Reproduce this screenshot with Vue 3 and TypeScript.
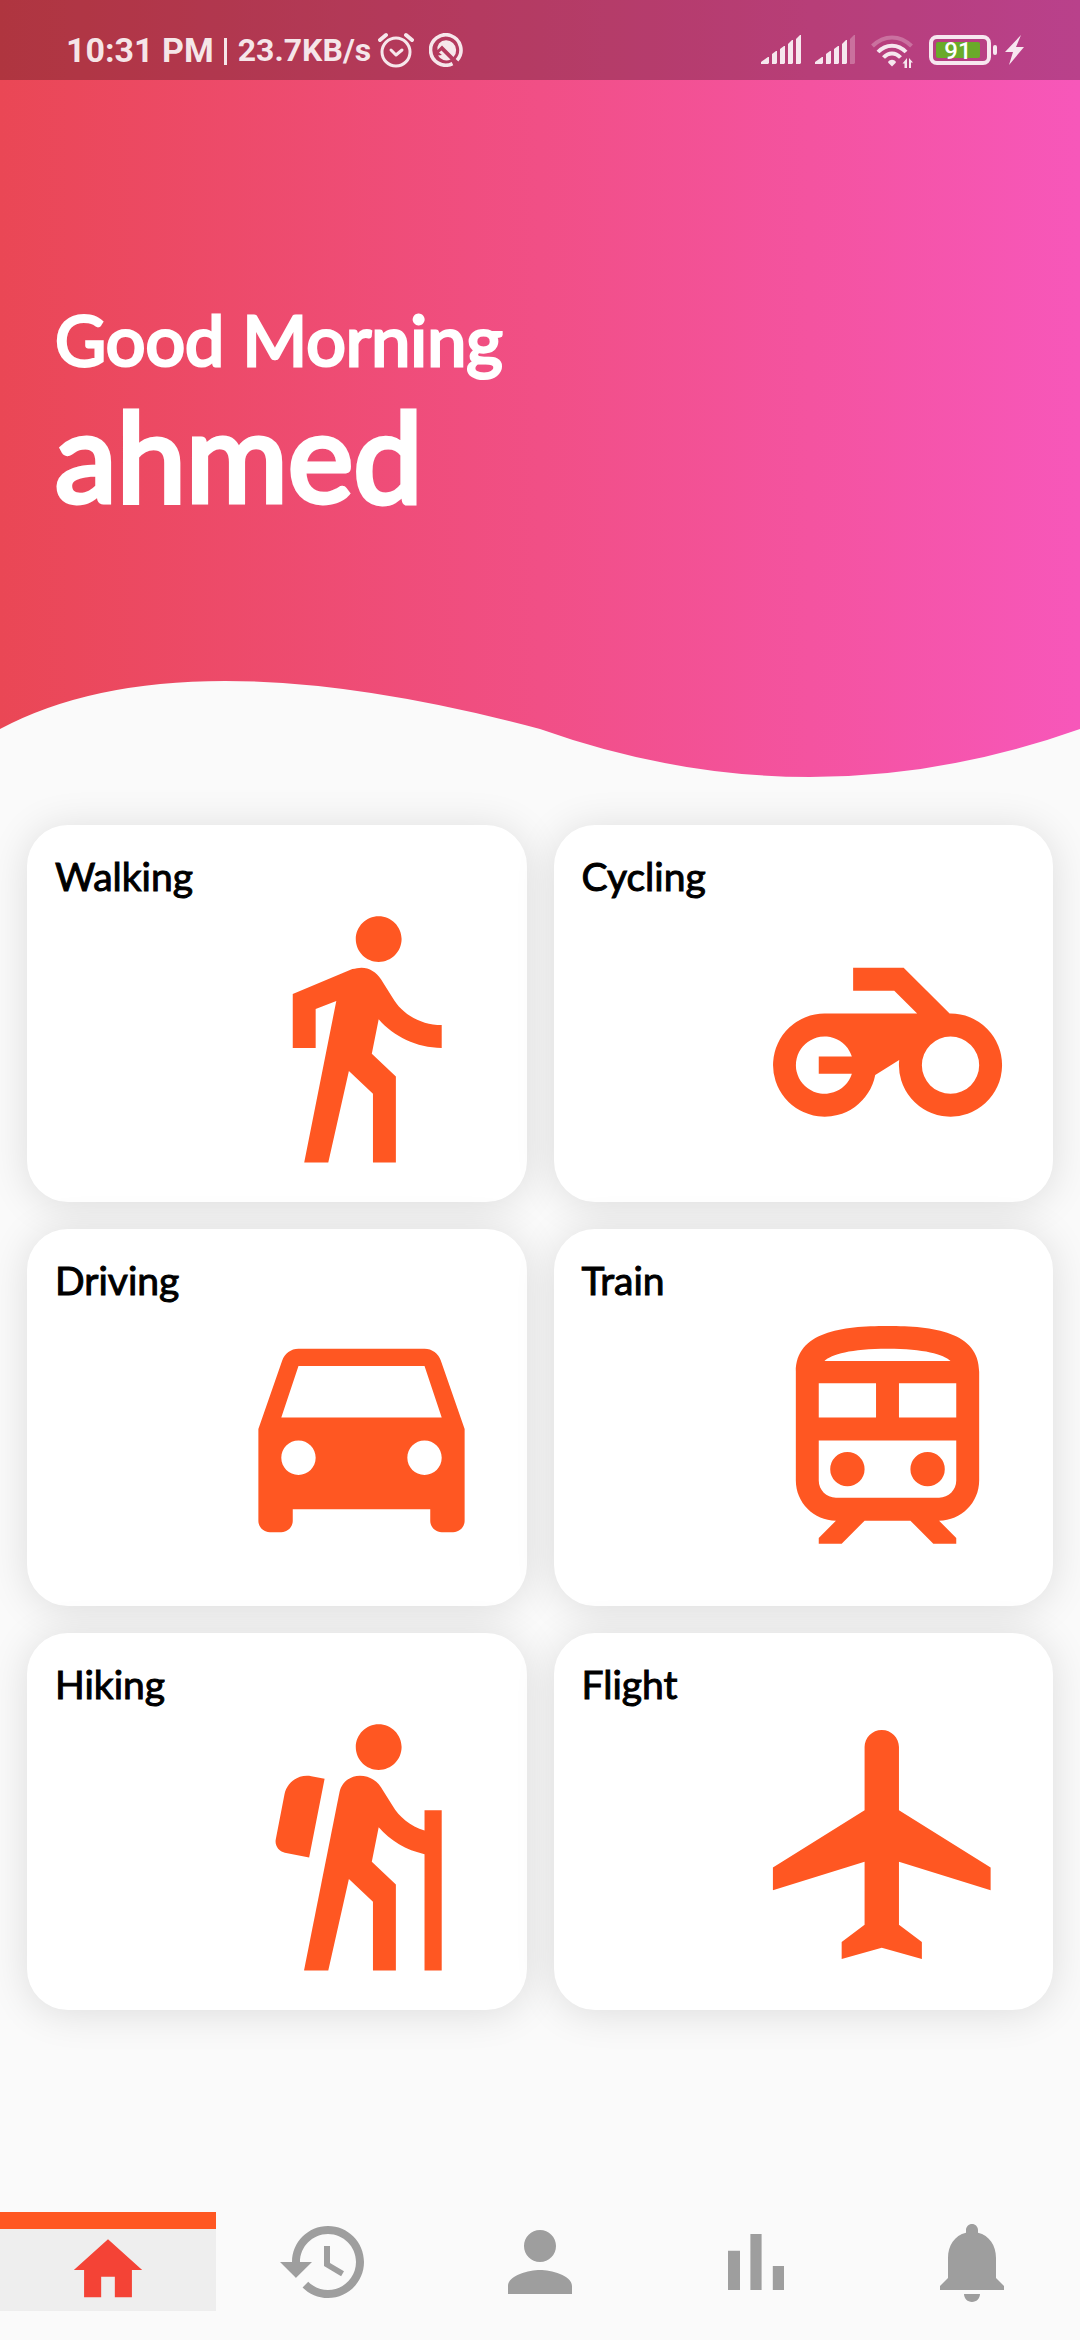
<script setup lang="ts">
import { ref } from 'vue'

interface Activity {
  name: string
  icon: string
}

interface Tab {
  id: string
  label: string
  icon: string
}

const userName = 'ahmed'

const activities: Activity[] = [
  {
    name: 'Walking',
    icon: 'M13.5 5.5c1.1 0 2-.9 2-2s-.9-2-2-2-2 .9-2 2 .9 2 2 2zM9.8 8.9L7 23h2.1l1.8-8 2.1 2v6h2v-7.5l-2.1-2 .6-3C14.8 12 16.8 13 19 13v-2c-1.9 0-3.5-1-4.3-2.4l-1-1.6c-.4-.6-1-1-1.7-1-.3 0-.5.1-.8.1L6 8.3V13h2V9.6l1.8-.7z',
  },
  {
    name: 'Cycling',
    icon: 'M17.42 10L13.41 6H9v2h3.59l2 2H6.5A4.5 4.5 0 1 0 10.93 15.35L13.02 14.05A4.5 4.5 0 1 0 17.42 10zM8.89 15.25A2.5 2.5 0 1 1 8.89 13.75H6v1.5zM17.5 17a2.5 2.5 0 1 1 0-5 2.5 2.5 0 0 1 0 5z',
  },
  {
    name: 'Driving',
    icon: 'M18.92 5.01C18.72 4.42 18.16 4 17.5 4h-11c-.66 0-1.21.42-1.42 1.01L3 11v8c0 .55.45 1 1 1h1c.55 0 1-.45 1-1v-1h12v1c0 .55.45 1 1 1h1c.55 0 1-.45 1-1v-8l-2.08-5.99zM6.5 15c-.83 0-1.5-.67-1.5-1.5S5.67 12 6.5 12s1.5.67 1.5 1.5S7.33 15 6.5 15zm11 0c-.83 0-1.5-.67-1.5-1.5s.67-1.5 1.5-1.5 1.5.67 1.5 1.5-.67 1.5-1.5 1.5zM5 10l1.5-4.5h11L19 10H5z',
  },
  {
    name: 'Train',
    icon: 'M12 2C8 2 4 2.5 4 6v9.5C4 17.43 5.57 19 7.5 19L6 20.5v.5h2l2-2h4l2 2h2v-.5L16.5 19c1.93 0 3.5-1.57 3.5-3.5V6c0-3.5-4-4-8-4zM12 4c3.2 0 4.9.5 5.5 1.06h-11C7.1 4.5 8.8 4 12 4zM6 7h5v3H6zM13 7h5v3h-5zM6 12h12v3.5c0 .83-.67 1.5-1.5 1.5h-9c-.83 0-1.5-.67-1.5-1.5zM8.5 13a1.5 1.5 0 1 0 0 3 1.5 1.5 0 0 0 0-3zM15.5 13a1.5 1.5 0 1 0 0 3 1.5 1.5 0 0 0 0-3z',
  },
  {
    name: 'Hiking',
    icon: 'M13.5 5.5c1.1 0 2-.9 2-2s-.9-2-2-2-2 .9-2 2 .9 2 2 2zM17.5 10.78c-1.23-.37-2.22-1.17-2.8-2.18l-1-1.6c-.41-.65-1.11-1-1.84-1-.78 0-1.59.5-1.78 1.44S7 23 7 23h2.1l1.8-8 2.1 2v6h2v-7.5l-2.1-2 .6-3c1 1.15 2.41 2.01 4 2.34V23H19V9h-1.5v1.78zM7.43 13.13l-2.12-.41c-.54-.11-.9-.63-.79-1.17l.76-3.93c.21-1.08 1.26-1.79 2.34-1.58l1.16.23-1.35 6.86z',
  },
  {
    name: 'Flight',
    icon: 'M21 16v-2l-8-5V3.5c0-.83-.67-1.5-1.5-1.5S10 2.67 10 3.5V9l-8 5v2l8-2.5V19l-2 1.5V22l3.5-1 3.5 1v-1.5L13 19v-5.5l8 2.5z',
  },
]

const tabs: Tab[] = [
  { id: 'home', label: 'Home', icon: 'M10 20v-6h4v6h5v-8h3L12 3 2 12h3v8z' },
  {
    id: 'history',
    label: 'History',
    icon: 'M13 3c-4.97 0-9 4.03-9 9H1l3.89 3.89.07.14L9 12H6c0-3.87 3.13-7 7-7s7 3.13 7 7-3.13 7-7 7c-1.93 0-3.68-.79-4.94-2.06l-1.42 1.42C8.27 19.99 10.51 21 13 21c4.97 0 9-4.03 9-9s-4.03-9-9-9zm-1 5v5l4.28 2.54.72-1.21-3.5-2.08V8H12z',
  },
  {
    id: 'profile',
    label: 'Profile',
    icon: 'M12 12c2.21 0 4-1.79 4-4s-1.79-4-4-4-4 1.79-4 4 1.79 4 4 4zm0 2c-2.67 0-8 1.34-8 4v2h16v-2c0-2.66-5.33-4-8-4z',
  },
  { id: 'stats', label: 'Statistics', icon: 'M5 9.2h3V19H5zM10.6 5h2.8v14h-2.8zm5.6 8H19v6h-2.8z' },
  {
    id: 'alerts',
    label: 'Notifications',
    icon: 'M12 22c1.1 0 2-.9 2-2h-4c0 1.1.89 2 2 2zm6-6v-5c0-3.07-1.64-5.64-4.5-6.32V4c0-.83-.67-1.5-1.5-1.5s-1.5.67-1.5 1.5v.68C7.63 5.36 6 7.92 6 11v5l-2 2v1h16v-1l-2-2z',
  },
]

const activeTab = ref('home')

// Signal strength per SIM card, out of five bars.
const signals = [5, 4]
const signalBars = [
  'M0 29v-2l7-5h1v6l-1 1z',
  'M11 29V19l4-3h1v12l-1 1z',
  'M19 29V14l4-3h1v17l-1 1z',
  'M27 29V9l4-4h1v23l-1 1z',
  'M35 29V4l4-4h1v28l-1 1z',
]
</script>

<template>
  <div class="page">
    <header class="hero">
      <div class="status">
        <span class="clock">10:31 PM</span>
        <span class="divider"></span>
        <span class="speed">23.7KB/s</span>
        <svg class="alarm" viewBox="0 0 36 36" width="36" height="36" fill="none" stroke="currentColor" stroke-linecap="round">
          <circle cx="18" cy="20" r="14" stroke-width="3" />
          <path d="M2 8l6-5M34 8l-6-5" stroke-width="4" />
          <path d="M13 18l5 5 6-5" stroke-width="3" stroke-linejoin="round" />
        </svg>
        <svg class="app-mark" viewBox="0 0 34 34" width="34" height="34">
          <path d="M23.5 30.6A15.2 15.2 0 1 1 28 27.2" fill="none" stroke="currentColor" stroke-width="3.6" />
          <path d="M10 10.500A9.600 9.600 0 0 1 24.500 24L13 12.500L8.500 17A9 9 0 0 1 10 10.500z" fill="currentColor" />
          <path d="M12.500 17.500l9 9A9.600 9.600 0 0 1 9 22.500l4-.5-3-2.500z" fill="currentColor" />
        </svg>
        <span class="spacer"></span>
        <svg v-for="(level, i) in signals" :key="i" class="signal" viewBox="0 0 40 29" width="40" height="29">
          <path v-for="(bar, n) in signalBars" :key="n" :d="bar" fill="currentColor" :opacity="n < level ? 1 : 0.3" />
        </svg>
        <svg class="wifi" viewBox="0 0 42 34" width="42" height="34">
          <g fill="none" stroke="currentColor">
            <path d="M1.500 11C13 -.5 29 -.5 40.500 11" stroke-width="4" opacity=".3" />
            <path d="M7 17C15 8.500 27 8.500 35 17" stroke-width="4" />
            <path d="M12.500 22.500C17.500 17 24.500 17 29.500 22.500" stroke-width="4" />
          </g>
          <path d="M17 27c2-3 6-3 8 0l-.5 1-3.500 3.500L17.500 28z" fill="currentColor" />
          <path d="M36 33h-2.500v-4.500H31.500L36 23zM38 23v10h2v-5.500h2z" fill="currentColor" />
        </svg>
        <span class="battery"><span class="charge">91</span></span>
        <svg class="bolt" viewBox="0 0 19 30" width="19" height="30">
          <path d="M16 0L0 17h8L4 30 19 12h-8z" fill="currentColor" />
        </svg>
      </div>
      <div class="greeting">
        <p class="hello">Good Morning</p>
        <h1 class="name">{{ userName }}</h1>
      </div>
      <svg class="wave" viewBox="0 0 1080 96" preserveAspectRatio="none" aria-hidden="true">
        <path d="M0 48Q180 -48 540 48Q810 144 1080 48V97H0z" />
      </svg>
    </header>

    <main class="activities">
      <button v-for="item in activities" :key="item.name" type="button" class="card">
        <span class="card-title">{{ item.name }}</span>
        <svg class="card-icon" viewBox="0 0 24 24" aria-hidden="true">
          <path :d="item.icon" fill-rule="evenodd" />
        </svg>
      </button>
    </main>

    <nav class="tabs">
      <button
        v-for="tab in tabs"
        :key="tab.id"
        type="button"
        class="tab"
        :class="{ active: tab.id === activeTab }"
        :aria-label="tab.label"
        @click="activeTab = tab.id"
      >
        <svg class="tab-icon" viewBox="0 0 24 24" aria-hidden="true">
          <path :d="tab.icon" />
        </svg>
      </button>
    </nav>
  </div>
</template>

<style>
body {
  background: #fafafa;
}
</style>

<style scoped>
.page {
  display: flex;
  flex-direction: column;
  min-height: 100vh;
  background: #fafafa;
  font-family: Lato, "Open Sans", sans-serif;
}

.hero {
  background: linear-gradient(to right, #ea4755, #f14f86 50%, #f757ba);
  color: #fff;
}

.status {
  box-sizing: border-box;
  display: flex;
  align-items: center;
  height: 80px;
  padding: 19px 56px 0 66px;
  background: rgba(0, 0, 0, 0.25);
  color: rgba(255, 255, 255, 0.88);
  font-family: Roboto, sans-serif;
  font-weight: 700;
}

.clock {
  font-size: 34px;
}

.divider {
  width: 3px;
  height: 27px;
  margin: 4px 11px 0 10px;
  background: currentColor;
}

.speed {
  font-size: 32px;
}

.alarm {
  margin-left: 7px;
}

.app-mark {
  margin-left: 15px;
}

.spacer {
  flex: 1;
}

.signal {
  margin-right: 14px;
}

.wifi {
  margin: 4px 16px 0 2px;
}

.battery {
  position: relative;
  box-sizing: border-box;
  width: 62px;
  height: 30px;
  margin-right: 14px;
  padding: 3px 7px 3px 3px;
  border: 4px solid currentColor;
  border-radius: 8px;
}

.battery::after {
  content: "";
  position: absolute;
  top: 6px;
  right: -10px;
  width: 4px;
  height: 10px;
  border-radius: 2px;
  background: currentColor;
}

.charge {
  display: block;
  height: 16px;
  border-radius: 2px;
  background: #6aaa2a;
  color: #fff;
  font-size: 24px;
  font-weight: 500;
  line-height: 19px;
  text-align: center;
}

.greeting {
  padding: 214px 55px 157px;
}

.hello,
.name {
  margin: 0;
  font-weight: 400;
}

.hello {
  font-size: 70px;
  line-height: 90px;
  -webkit-text-stroke: 3px currentColor;
}

.name {
  font-size: 124px;
  line-height: 140px;
  -webkit-text-stroke: 5px currentColor;
}

.wave {
  display: block;
  width: 100%;
  height: 96px;
  fill: #fafafa;
}

.activities {
  display: grid;
  grid-template-columns: 1fr 1fr;
  gap: 27px;
  padding: 48px 27px;
}

.card {
  display: flex;
  flex-direction: column;
  padding: 29px 28px 28px;
  border: 0;
  border-radius: 41px;
  background: #fff;
  box-shadow: 0 3px 40px rgba(0, 0, 0, 0.12);
  color: #000;
  font-family: inherit;
  text-align: left;
}

.card-title {
  font-size: 39px;
  line-height: 45px;
  -webkit-text-stroke: 1px currentColor;
}

.card-icon {
  align-self: flex-end;
  width: 275px;
  height: 275px;
  fill: #ff5722;
}

.tabs {
  display: flex;
  margin-top: auto;
  padding-bottom: 29px;
}

.tab {
  box-sizing: border-box;
  display: flex;
  flex: 1;
  align-items: center;
  justify-content: center;
  height: 99px;
  padding: 0;
  border: 0;
  background: none;
}

.tab-icon {
  width: 96px;
  height: 96px;
  fill: #9e9e9e;
}

.tab.active {
  border-top: 17px solid #ff5722;
  background: #eee;
}

.tab.active .tab-icon {
  width: 82px;
  height: 82px;
  fill: #f44336;
}
</style>
